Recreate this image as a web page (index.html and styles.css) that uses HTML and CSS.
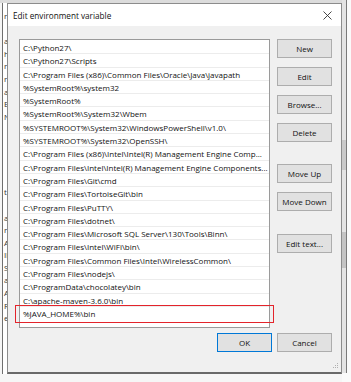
FILE: index.html
```html
<!DOCTYPE html>
<html>
<head>
<meta charset="utf-8">
<link rel="stylesheet" href="styles.css">
</head>
<body>
<div class="screen">
  <div class="bg-left">
    <div class="bg-letters">
      <span>r</span><span>&nbsp;</span><span>a</span><span>h</span><span>r</span><span>r</span><span>a</span><span>E</span><span>N</span>
      <span>&nbsp;</span><span>&nbsp;</span><span>&nbsp;</span><span>&nbsp;</span><span>&nbsp;</span>
      <span>t</span><span>&nbsp;</span><span>a</span><span>r</span><span>A</span><span>Il</span><span>S</span><span>a</span><span>A</span><span>R</span><span>e</span>
    </div>
  </div>
  <div class="dialog">
    <div class="titlebar">
      <span class="title">Edit environment variable</span>
      <svg class="close" width="9" height="9" viewBox="0 0 9 9"><path d="M0.5 0.5 L8.5 8.5 M8.5 0.5 L0.5 8.5" stroke="#333" stroke-width="0.9" fill="none"/></svg>
    </div>
    <div class="body">
      <div class="main">
        <div class="list">
          <div class="row">C:\Python27\</div>
          <div class="row">C:\Python27\Scripts</div>
          <div class="row">C:\Program Files (x86)\Common Files\Oracle\Java\javapath</div>
          <div class="row">%SystemRoot%\system32</div>
          <div class="row">%SystemRoot%</div>
          <div class="row">%SystemRoot%\System32\Wbem</div>
          <div class="row">%SYSTEMROOT%\System32\WindowsPowerShell\v1.0\</div>
          <div class="row">%SYSTEMROOT%\System32\OpenSSH\</div>
          <div class="row">C:\Program Files (x86)\Intel\Intel(R) Management Engine Comp...</div>
          <div class="row">C:\Program Files\Intel\Intel(R) Management Engine Components...</div>
          <div class="row">C:\Program Files\Git\cmd</div>
          <div class="row">C:\Program Files\TortoiseGit\bin</div>
          <div class="row">C:\Program Files\PuTTY\</div>
          <div class="row">C:\Program Files\dotnet\</div>
          <div class="row">C:\Program Files\Microsoft SQL Server\130\Tools\Binn\</div>
          <div class="row">C:\Program Files\Intel\WiFi\bin\</div>
          <div class="row">C:\Program Files\Common Files\Intel\WirelessCommon\</div>
          <div class="row">C:\Program Files\nodejs\</div>
          <div class="row">C:\ProgramData\chocolatey\bin</div>
          <div class="row">C:\apache-maven-3.6.0\bin</div>
          <div class="row row-hl">%JAVA_HOME%\bin<span class="highlight"></span></div>
        </div>
        <div class="buttons">
          <div class="btn">New</div>
          <div class="btn">Edit</div>
          <div class="btn">Browse...</div>
          <div class="btn">Delete</div>
          <div class="btn gap-lg">Move Up</div>
          <div class="btn">Move Down</div>
          <div class="btn gap-lg">Edit text...</div>
        </div>
      </div>
      <div class="footer">
        <div class="btn btn-default">OK</div>
        <div class="btn">Cancel</div>
      </div>
      <svg class="grip" width="6" height="6" viewBox="0 0 6 6">
        <rect x="4" y="0" width="1" height="1" fill="#b0b0b0"/>
        <rect x="2" y="2" width="1" height="1" fill="#b0b0b0"/>
        <rect x="4" y="2" width="1" height="1" fill="#b0b0b0"/>
        <rect x="0" y="4" width="1" height="1" fill="#b0b0b0"/>
        <rect x="2" y="4" width="1" height="1" fill="#b0b0b0"/>
        <rect x="4" y="4" width="1" height="1" fill="#b0b0b0"/>
      </svg>
    </div>
  </div>
  <div class="bg-right">
    <div class="scroll"></div>
  </div>
</div>
</body>
</html>
```

FILE: styles.css
```css
html, body {
  margin: 0;
  padding: 0;
}
body {
  width: 351px;
  height: 382px;
  overflow: hidden;
  background: #f4f4f4;
  font-family: "Open Sans", "Noto Sans", sans-serif;
  font-size: 8px;
  color: #111;
}
.screen {
  display: flex;
  height: 382px;
  background: linear-gradient(#dcdcdc, #dcdcdc) top / 100% 3px no-repeat, #f6f6f6;
}
.bg-left {
  width: 4px;
  margin-left: 2px;
  margin-top: 3px;
  height: 371px;
  border-left: 1px solid #6f6f6f;
  background: #fff;
  overflow: hidden;
}
.bg-letters {
  display: flex;
  flex-direction: column;
  padding-top: 7px;
  padding-left: 1px;
  font-size: 8px;
  line-height: 12.6px;
  color: #333;
}
.dialog {
  width: 335px;
  height: 371px;
  margin-top: 3px;
  box-sizing: border-box;
  border: 1px solid #8c8c8c;
  border-bottom: 2px solid #6a6a6a;
  display: flex;
  flex-direction: column;
  background: #f0f0f0;
}
.titlebar {
  height: 22px;
  flex: none;
  background: #fff;
  display: flex;
  align-items: center;
  justify-content: space-between;
  padding-left: 5px;
  padding-right: 9px;
}
.title {
  font-size: 8.2px;
  color: #111;
}
.close {
  margin-top: 1px;
}
.body {
  flex: 1;
  position: relative;
  padding: 13px 9px 0 11px;
}
.main {
  display: flex;
  gap: 7px;
}
.list {
  width: 251px;
  height: 289px;
  box-sizing: border-box;
  border: 1px solid #9a9a9a;
  background: #fff;
  padding-top: 1px;
}
.row {
  height: 13.3px;
  line-height: 13.3px;
  box-sizing: border-box;
  border-bottom: 1px solid #ececec;
  padding-left: 3px;
  white-space: nowrap;
  overflow: hidden;
}
.row-hl {
  position: relative;
  overflow: visible;
  border-bottom: none;
}
.highlight {
  position: absolute;
  left: -5px;
  right: -5px;
  top: -2px;
  bottom: -3px;
  border: 1.5px solid #e3242b;
}
.buttons {
  display: flex;
  flex-direction: column;
  gap: 9px;
}
.btn {
  width: 55px;
  height: 19px;
  box-sizing: border-box;
  border: 1px solid #adadad;
  background: #e1e1e1;
  display: flex;
  align-items: center;
  justify-content: center;
  font-size: 8px;
  color: #111;
}
.gap-lg {
  margin-top: 13px;
}
.buttons .btn:nth-child(7) {
  margin-top: 14px;
}
.btn-default {
  border-color: #0078d7;
}
.footer {
  display: flex;
  justify-content: flex-end;
  gap: 5px;
  margin-top: 5px;
}
.grip {
  position: absolute;
  right: 2px;
  bottom: 3px;
}
.bg-right {
  width: 9px;
  margin-top: 0;
  display: flex;
  background: #fafafa;
}
.scroll {
  width: 4px;
  height: 373px;
  background: linear-gradient(#e4e4e4 0 140px, #c9c9c9 140px 170px, #e4e4e4 170px 232px, #c4c4c4 232px 268px, #e4e4e4 268px);
  border-right: 1px solid #7a7a7a;
}
```
